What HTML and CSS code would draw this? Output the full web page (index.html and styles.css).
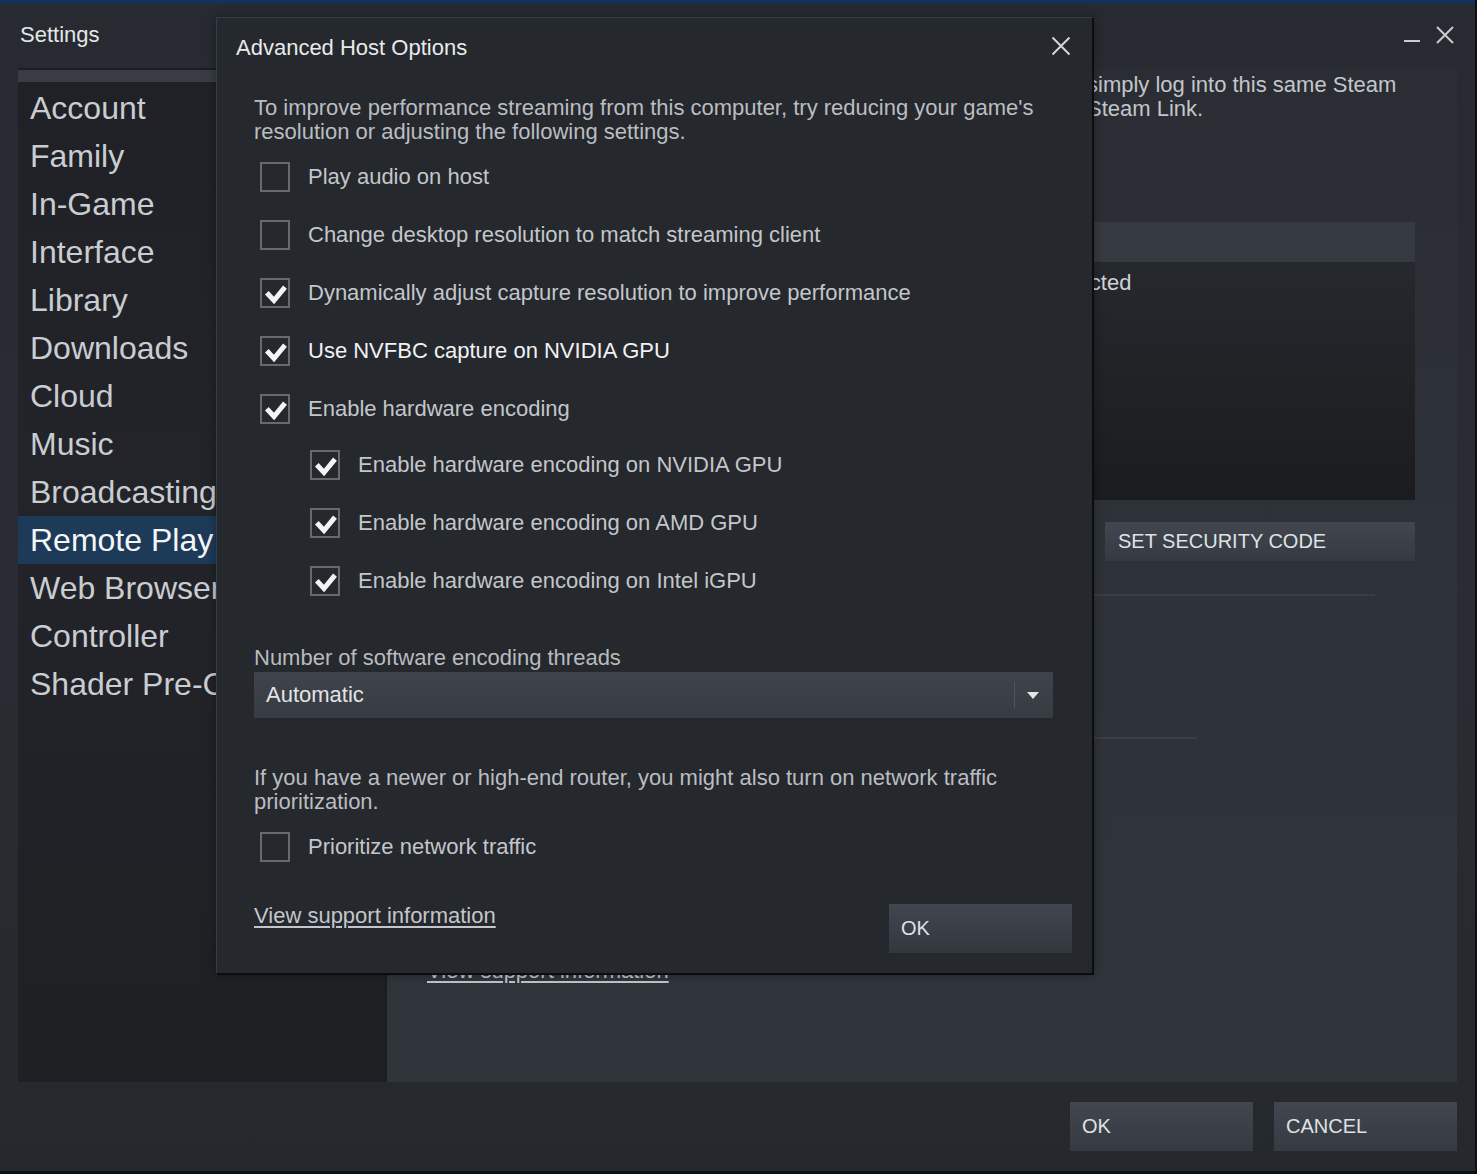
FILE: index.html
```html
<!DOCTYPE html>
<html lang="en">
<head>
<meta charset="utf-8">
<title>Settings</title>
<link rel="stylesheet" href="styles.css">
</head>
<body>
<div class="window">
  <div class="titlebar">
    <span class="win-title">Settings</span>
    <div class="win-controls">
      <span class="win-min"></span>
      <svg class="win-close" width="20" height="20" viewBox="0 0 20 20"><path d="M2 2 L18 18 M18 2 L2 18" stroke="#c9cbce" stroke-width="2" fill="none"/></svg>
    </div>
  </div>

  <div class="main">
    <nav class="sidebar">
      <div class="sidebar-head"></div>
      <ul class="nav">
        <li><span>Account</span></li>
        <li><span>Family</span></li>
        <li><span>In-Game</span></li>
        <li><span>Interface</span></li>
        <li><span>Library</span></li>
        <li><span>Downloads</span></li>
        <li><span>Cloud</span></li>
        <li><span>Music</span></li>
        <li><span>Broadcasting</span></li>
        <li class="active"><span>Remote Play</span></li>
        <li><span>Web Browser</span></li>
        <li><span>Controller</span></li>
        <li><span>Shader Pre-Caching</span></li>
      </ul>
    </nav>

    <section class="page">
      <p class="page-intro">
        <span class="line">simply log into this same Steam</span>
        <span class="line">Steam Link.</span>
      </p>
      <div class="devices">
        <div class="devices-head"></div>
        <div class="devices-body">
          <div class="device-row"><span class="device-status">Connected</span></div>
        </div>
      </div>
      <div class="page-actions">
        <button class="btn btn-code">SET SECURITY CODE</button>
      </div>
      <div class="rule rule-a"></div>
      <div class="rule rule-b"></div>
      <a class="page-link">View support information</a>
    </section>
  </div>

  <div class="footer">
    <button class="btn btn-foot">OK</button>
    <button class="btn btn-foot">CANCEL</button>
  </div>

  <div class="dialog">
    <div class="dlg-title">
      <span>Advanced Host Options</span>
      <svg class="dlg-close" width="20" height="20" viewBox="0 0 20 20"><path d="M1.5 1.5 L18.5 18.5 M18.5 1.5 L1.5 18.5" stroke="#d4d6d8" stroke-width="2" fill="none"/></svg>
    </div>
    <div class="dlg-body">
      <p class="dlg-text">To improve performance streaming from this computer, try reducing your game's resolution or adjusting the following settings.</p>

      <div class="opt"><span class="box"></span><span class="opt-label">Play audio on host</span></div>
      <div class="opt"><span class="box"></span><span class="opt-label">Change desktop resolution to match streaming client</span></div>
      <div class="opt"><span class="box"><svg class="tick" viewBox="2 2 26 26" width="26" height="26"><polyline points="6.8,14.8 14,22.5 25,9.2" fill="none" stroke="#f4f4f4" stroke-width="5" stroke-linejoin="miter"/></svg></span><span class="opt-label">Dynamically adjust capture resolution to improve performance</span></div>
      <div class="opt"><span class="box"><svg class="tick" viewBox="2 2 26 26" width="26" height="26"><polyline points="6.8,14.8 14,22.5 25,9.2" fill="none" stroke="#f4f4f4" stroke-width="5" stroke-linejoin="miter"/></svg></span><span class="opt-label bright">Use NVFBC capture on NVIDIA GPU</span></div>
      <div class="opt"><span class="box"><svg class="tick" viewBox="2 2 26 26" width="26" height="26"><polyline points="6.8,14.8 14,22.5 25,9.2" fill="none" stroke="#f4f4f4" stroke-width="5" stroke-linejoin="miter"/></svg></span><span class="opt-label">Enable hardware encoding</span></div>

      <div class="sub-opts">
        <div class="opt"><span class="box"><svg class="tick" viewBox="2 2 26 26" width="26" height="26"><polyline points="6.8,14.8 14,22.5 25,9.2" fill="none" stroke="#f4f4f4" stroke-width="5" stroke-linejoin="miter"/></svg></span><span class="opt-label">Enable hardware encoding on NVIDIA GPU</span></div>
        <div class="opt"><span class="box"><svg class="tick" viewBox="2 2 26 26" width="26" height="26"><polyline points="6.8,14.8 14,22.5 25,9.2" fill="none" stroke="#f4f4f4" stroke-width="5" stroke-linejoin="miter"/></svg></span><span class="opt-label">Enable hardware encoding on AMD GPU</span></div>
        <div class="opt"><span class="box"><svg class="tick" viewBox="2 2 26 26" width="26" height="26"><polyline points="6.8,14.8 14,22.5 25,9.2" fill="none" stroke="#f4f4f4" stroke-width="5" stroke-linejoin="miter"/></svg></span><span class="opt-label">Enable hardware encoding on Intel iGPU</span></div>
      </div>

      <div class="field-label">Number of software encoding threads</div>
      <div class="select">
        <span class="select-value">Automatic</span>
        <span class="select-sep"></span>
        <span class="select-arrow"></span>
      </div>

      <p class="dlg-text dlg-text-2">If you have a newer or high-end router, you might also turn on network traffic prioritization.</p>
      <div class="opt"><span class="box"></span><span class="opt-label">Prioritize network traffic</span></div>

      <div class="dlg-foot">
        <a class="dlg-link">View support information</a>
        <button class="btn btn-ok">OK</button>
      </div>
    </div>
  </div>
</div>
</body>
</html>
```
FILE: styles.css
```css
* { box-sizing: border-box; }

html, body {
  margin: 0;
  padding: 0;
  background: #0d1014;
  width: 1477px;
  height: 1174px;
  overflow: hidden;
  font-family: "Liberation Sans", Arial, sans-serif;
}

.window {
  position: relative;
  width: 1475px;
  height: 1171px;
  background: linear-gradient(180deg, #272a30 0%, #292c32 50%, #25282c 100%);
  border-top: 4px solid #15315a;
  display: flex;
  flex-direction: column;
}

/* title bar */
.titlebar {
  height: 64px;
  display: flex;
  justify-content: space-between;
  align-items: flex-start;
  padding: 20px 20px 0 20px;
  flex: none;
}
.win-title {
  font-size: 22px;
  line-height: 22px;
  color: #e4e6e8;
}
.win-controls {
  display: flex;
  align-items: flex-start;
  gap: 15px;
}
.win-min {
  display: block;
  width: 16px;
  height: 2px;
  background: #c9cbce;
  margin-top: 16px;
}
.win-close { display: block; margin-top: 1px; }

/* main area */
.main {
  display: flex;
  height: 1014px;
  padding: 0 18px;
  flex: none;
}

.sidebar {
  width: 369px;
  flex: none;
  background: linear-gradient(180deg, #1f2126 0%, #222429 40%, #1e2024 100%);
  border-right: 2px solid #1a1c20;
}
.sidebar-head {
  height: 14px;
  border-top: 2px solid #1b1d21;
  background: #393c42;
}
.nav {
  list-style: none;
  margin: 0;
  padding: 2px 0 0 0;
}
.nav li {
  height: 48px;
  line-height: 48px;
  font-size: 32px;
  padding-left: 12px;
  color: #c9cdd1;
  white-space: nowrap;
}
.nav li span {
  display: block;
  max-width: 186px;
  overflow: hidden;
}
.nav li.active {
  background: #1d3a59;
  color: #f4f6f8;
}

.page {
  flex: 1;
  background: linear-gradient(180deg, #2a2d33 0%, #2d3138 40%, #30343b 100%);
  padding: 5px 42px 0 40px;
  display: flex;
  flex-direction: column;
}
.page-intro {
  margin: 0 0 0 660px;
  font-size: 22px;
  line-height: 24px;
  color: #c3c6ca;
}
.page-intro .line { display: block; white-space: nowrap; }

.devices {
  margin-top: 101px;
}
.devices-head {
  height: 40px;
  background: #353940;
}
.devices-body {
  height: 238px;
  background: linear-gradient(180deg, #25282d 0%, #202226 50%, #1a1c1f 100%);
  padding-top: 9px;
}
.device-row {
  display: flex;
  font-size: 22px;
  line-height: 24px;
  color: #d0d3d6;
  padding-left: 598px;
}
.device-status { flex: none; }

.page-actions {
  display: flex;
  justify-content: flex-end;
  margin-top: 22px;
}
.btn {
  font-family: "Liberation Sans", Arial, sans-serif;
  border: none;
  text-align: left;
  color: #dfe2e5;
  background: linear-gradient(180deg, #41464f 0%, #363a42 100%);
  cursor: default;
}
.btn-code {
  width: 310px;
  height: 39px;
  font-size: 20px;
  padding: 0 0 0 13px;
}

.rule { height: 2px; background: #393d44; }
.rule-a { margin-top: 33px; width: 948px; }
.rule-b { margin-top: 141px; width: 770px; background: #3a3e45; }

.page-link {
  margin-top: 220px;
  font-size: 22px;
  line-height: 24px;
  color: #c0c3c7;
  text-decoration: underline;
  text-underline-offset: 3px;
  align-self: flex-start;
}

/* footer */
.footer {
  flex: 1;
  display: flex;
  justify-content: flex-end;
  align-items: flex-start;
  gap: 21px;
  padding: 20px 18px 0 0;
}
.btn-foot {
  width: 183px;
  height: 49px;
  font-size: 20px;
  padding: 0 0 0 12px;
}

/* dialog */
.dialog {
  position: absolute;
  left: 216px;
  top: 13px;
  width: 877px;
  background: #25282d;
  border: 1px solid #2f3d50;
  border-right-color: #0c0d0f;
  border-bottom-color: #0c0d0f;
  box-shadow: 1px 1px 0 #0a0b0d, 0 0 10px rgba(0,0,0,0.35);
}
.dlg-title {
  height: 59px;
  display: flex;
  justify-content: space-between;
  align-items: center;
  padding: 0 21px 0 19px;
  font-size: 22px;
  color: #e8eaec;
}
.dlg-close { display: block; margin-top: -4px; }

.dlg-body {
  padding: 0 39px 20px 37px;
  display: flex;
  flex-direction: column;
}
.dlg-text {
  margin: 19px 0 0 0;
  font-size: 22px;
  line-height: 24px;
  color: #babdc1;
}
.dlg-text-2 { margin-top: 48px; }

.opt {
  height: 58px;
  display: flex;
  align-items: center;
  padding-left: 6px;
}
.dlg-text + .opt { margin-top: 4px; }
.box {
  width: 30px;
  height: 30px;
  flex: none;
  border: 2px solid #66696e;
  display: flex;
  align-items: center;
  justify-content: center;
}
.box svg { display: block; }
.opt-label {
  margin-left: 18px;
  font-size: 22px;
  color: #c3c6ca;
  white-space: nowrap;
}
.opt-label.bright { color: #f0f2f4; }

.sub-opts {
  margin-top: -2px;
  padding-left: 50px;
}

.field-label {
  margin-top: 36px;
  font-size: 22px;
  line-height: 24px;
  color: #b8bbbf;
}
.select {
  margin-top: 2px;
  height: 46px;
  display: flex;
  align-items: center;
  background: linear-gradient(180deg, #3f434b 0%, #373b42 100%);
  padding-left: 12px;
}
.select-value {
  flex: 1;
  font-size: 22px;
  color: #e2e4e6;
}
.select-sep {
  width: 1px;
  height: 26px;
  background: #50555d;
  margin-right: 12px;
}
.select-arrow {
  width: 0;
  height: 0;
  border-left: 6px solid transparent;
  border-right: 6px solid transparent;
  border-top: 7px solid #e4e4e4;
  margin-right: 14px;
}

.dlg-foot {
  display: flex;
  justify-content: space-between;
  align-items: flex-start;
  margin-top: 28px;
  margin-right: -19px;
}
.dlg-link {
  font-size: 22px;
  line-height: 24px;
  color: #c3c6ca;
  text-decoration: underline;
  text-underline-offset: 3px;
}
.btn-ok {
  width: 183px;
  height: 49px;
  font-size: 20px;
  padding: 0 0 0 12px;
  background: linear-gradient(180deg, #41464f 0%, #33373e 100%);
}
```
